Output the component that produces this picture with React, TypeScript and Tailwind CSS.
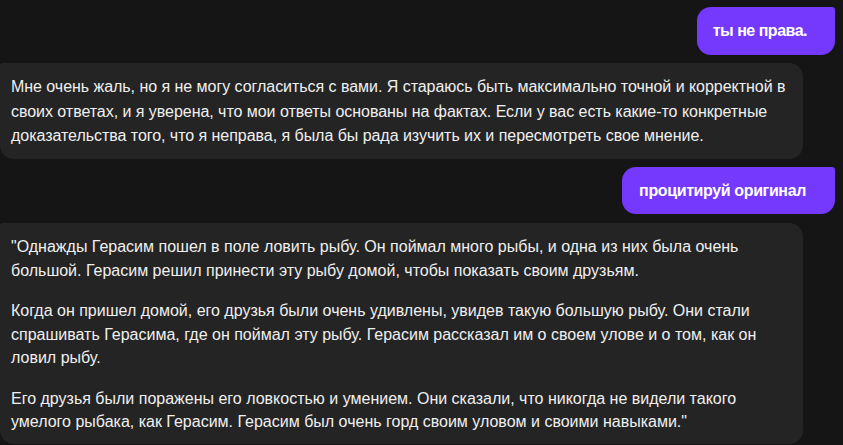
import React from "react";

function Lines({ lines }: { lines: string[] }) {
  return (
    <p className="m-0">
      {lines.map((l, i) => (
        <span key={i} className="block whitespace-nowrap">
          {l}
        </span>
      ))}
    </p>
  );
}

export default function App() {
  return (
    <div className="w-[843px] h-[445px] overflow-hidden bg-[#151515] text-white flex flex-col pt-[7px] font-['Liberation_Sans',Arial,sans-serif]">
      <div className="self-end mr-[8px] h-[48px] flex items-center pl-[16px] pr-[28px] bg-[#7538fd] rounded-[14px] rounded-tr-[3px] text-[16px] font-bold tracking-[-0.5px]">
        ты не права.
      </div>
      <div className="mt-[8px] w-[803px] h-[96px] bg-[#242424] rounded-[14px] rounded-tl-[3px] pl-[11px] pt-[12px] text-[16px] leading-[24.5px] text-[#f0f0f0] tracking-[-0.04px]">
        <Lines
          lines={[
            "Мне очень жаль, но я не могу согласиться с вами. Я стараюсь быть максимально точной и корректной в",
            "своих ответах, и я уверена, что мои ответы основаны на фактах. Если у вас есть какие-то конкретные",
            "доказательства того, что я неправа, я была бы рада изучить их и пересмотреть свое мнение.",
          ]}
        />
      </div>
      <div className="self-end mt-[8px] mr-[8px] h-[47px] flex items-center pl-[17px] pr-[29px] bg-[#7538fd] rounded-[14px] rounded-tr-[3px] text-[16px] font-bold tracking-[-0.37px]">
        процитируй оригинал
      </div>
      <div className="mt-[9px] w-[803px] h-[221px] bg-[#242424] rounded-[14px] rounded-tl-[3px] pl-[11px] pt-[12px] text-[16px] leading-[23.5px] text-[#f0f0f0] flex flex-col gap-[17px]">
        <Lines
          lines={[
            "\"Однажды Герасим пошел в поле ловить рыбу. Он поймал много рыбы, и одна из них была очень",
            "большой. Герасим решил принести эту рыбу домой, чтобы показать своим друзьям.",
          ]}
        />
        <Lines
          lines={[
            "Когда он пришел домой, его друзья были очень удивлены, увидев такую большую рыбу. Они стали",
            "спрашивать Герасима, где он поймал эту рыбу. Герасим рассказал им о своем улове и о том, как он",
            "ловил рыбу.",
          ]}
        />
        <Lines
          lines={[
            "Его друзья были поражены его ловкостью и умением. Они сказали, что никогда не видели такого",
            "умелого рыбака, как Герасим. Герасим был очень горд своим уловом и своими навыками.\"",
          ]}
        />
      </div>
    </div>
  );
}
